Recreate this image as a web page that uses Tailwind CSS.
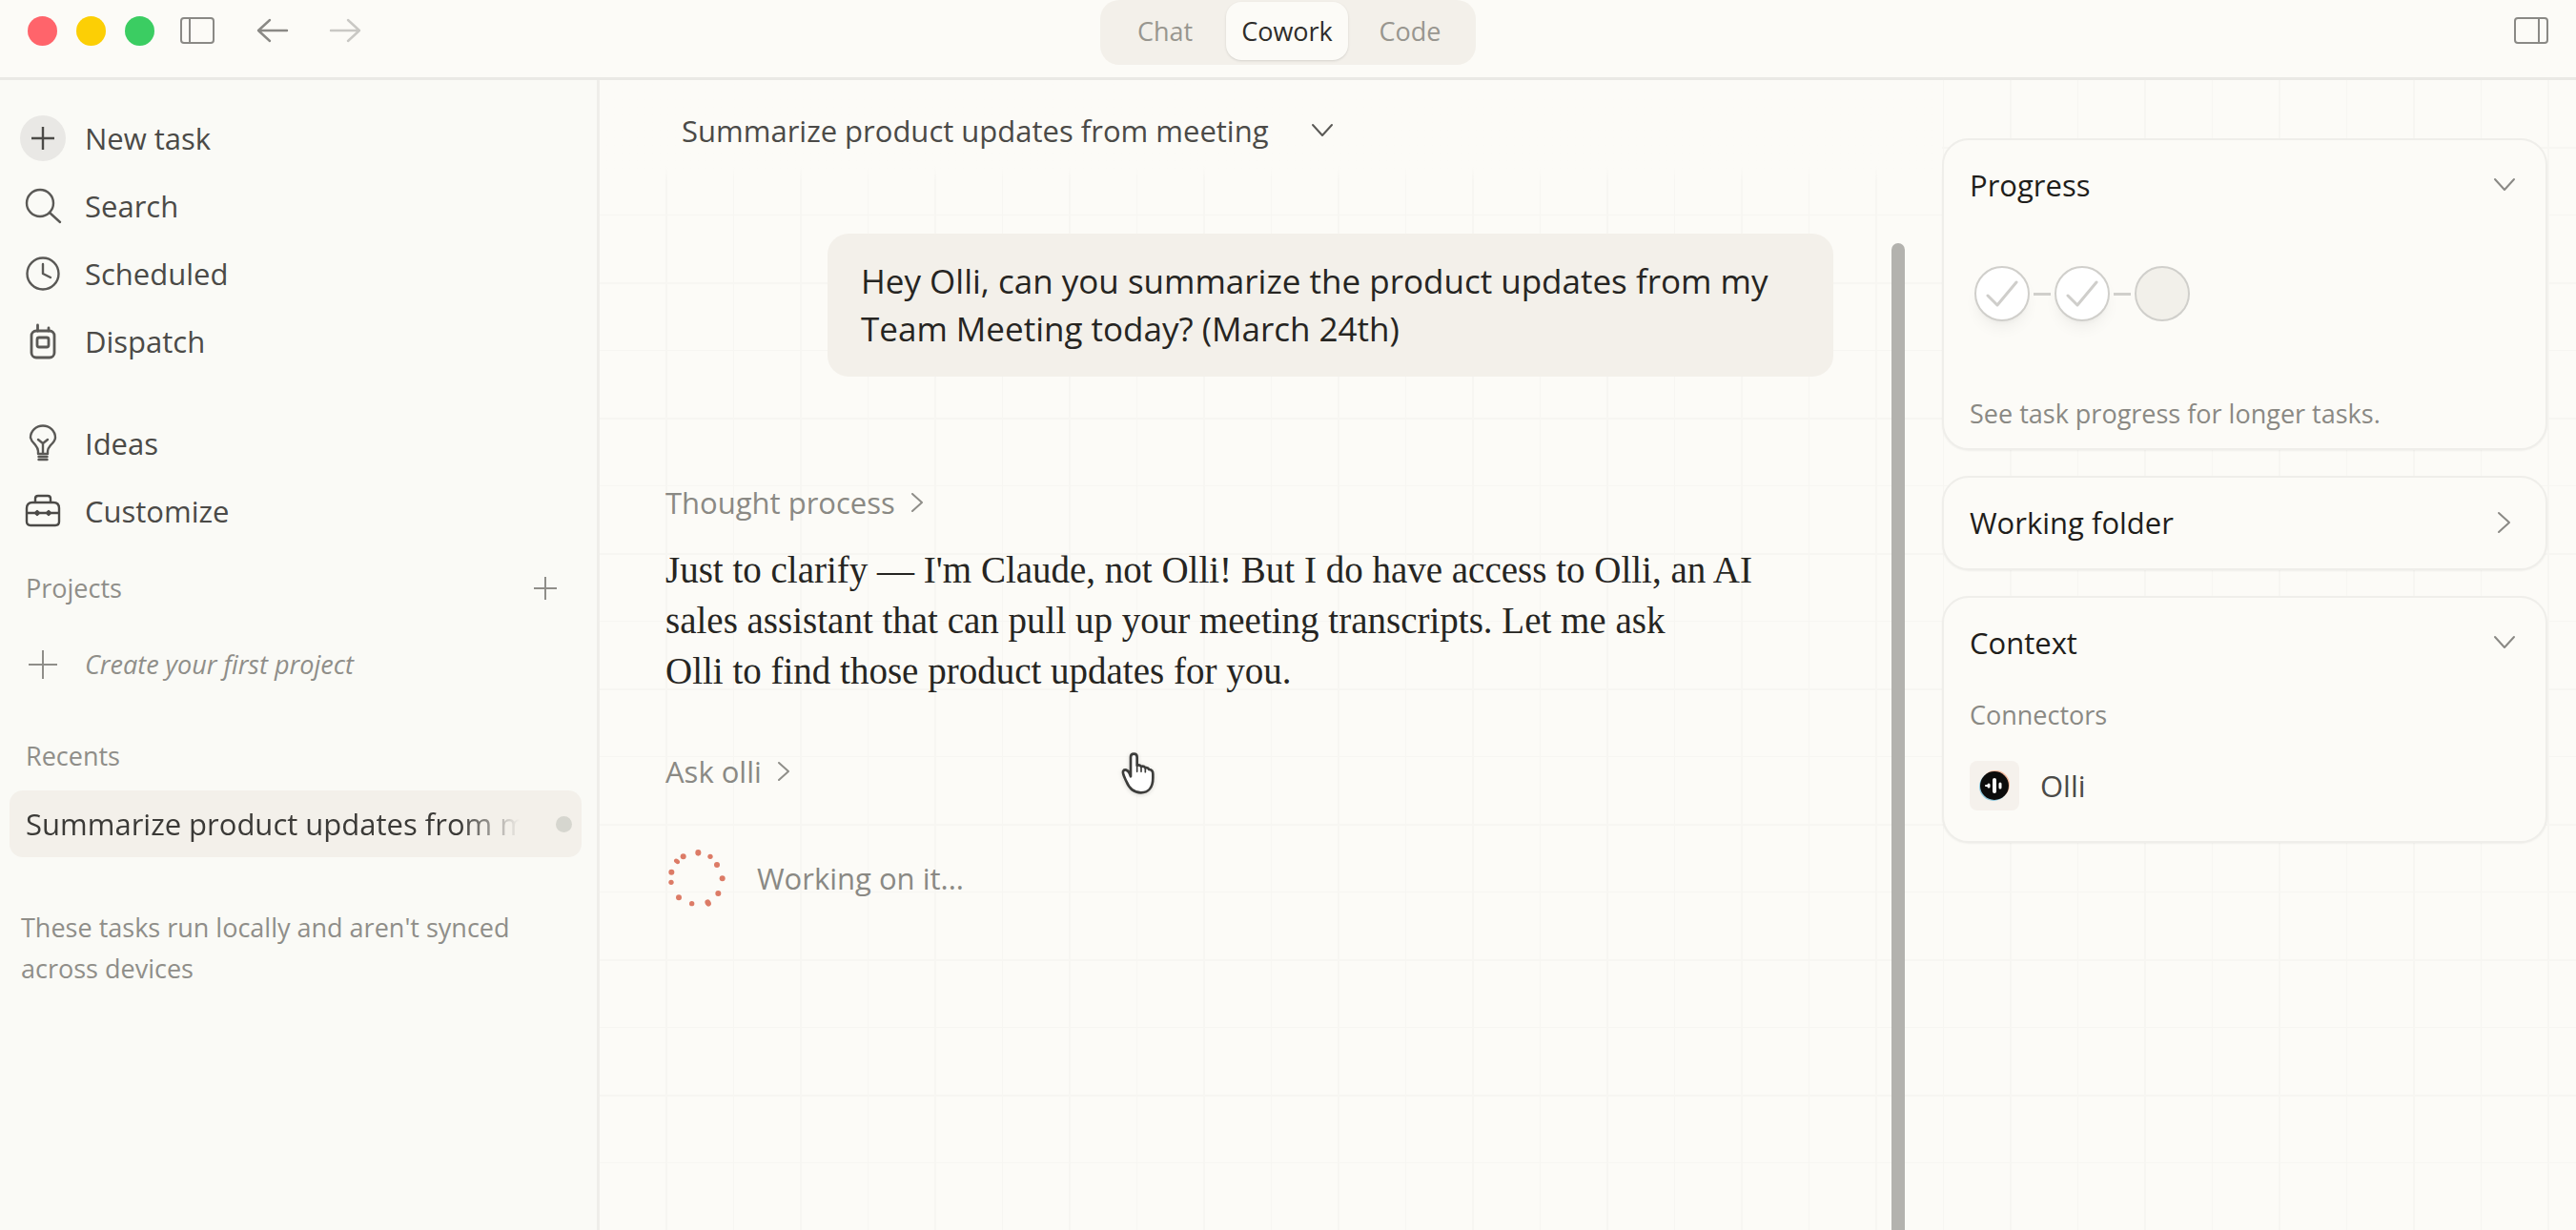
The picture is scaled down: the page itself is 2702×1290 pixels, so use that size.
<!DOCTYPE html>
<html lang="en">
<head>
  <meta charset="UTF-8" />
  <meta name="viewport" content="width=device-width, initial-scale=1.0"/>
  <title>Cowork | Summarize product updates from meeting</title>
  <script src="https://cdn.jsdelivr.net/npm/@tailwindcss/browser@4"></script>
</head>
<body class="bg-[#fcfbf7] text-[#4b4a47] font-['Open_Sans',sans-serif] text-[31px] leading-10">

  <div class="h-screen flex flex-col overflow-hidden">

    <!-- Title bar -->
    <header class="h-[84px] shrink-0 grid grid-cols-[1fr_auto_1fr] items-start border-b-3 border-[#eae9e5]">
      <div class="h-16 pl-[29px] flex items-center">
        <div class="flex gap-5">
          <button aria-label="Close" class="size-[31px] rounded-full bg-[#ff646b]"></button>
          <button aria-label="Minimize" class="size-[31px] rounded-full bg-[#fccf05]"></button>
          <button aria-label="Zoom" class="size-[31px] rounded-full bg-[#3bcd62]"></button>
        </div>
        <button aria-label="Toggle sidebar" class="ml-[26px]">
          <svg class="w-[38px] h-[30px]" viewBox="0 0 38 30" fill="none" stroke="#8a8985" stroke-width="2">
            <rect x="2" y="2" width="34" height="26" rx="3"/>
            <path d="M11 2v26"/>
          </svg>
        </button>
        <button aria-label="Back" class="ml-[43px]">
          <svg class="w-[34px] h-[30px]" viewBox="0 0 34 30" fill="none" stroke="#8a8985" stroke-width="2.400" stroke-linecap="round" stroke-linejoin="round">
            <path d="M32 15H2M14 4L2 15l12 11"/>
          </svg>
        </button>
        <button aria-label="Forward" class="ml-[42px]">
          <svg class="w-[34px] h-[30px]" viewBox="0 0 34 30" fill="none" stroke="#c9c8c4" stroke-width="2.400" stroke-linecap="round" stroke-linejoin="round">
            <path d="M2 15h30M20 4l12 11-12 11"/>
          </svg>
        </button>
      </div>

      <nav class="h-[68px] px-1 pt-[2px] pb-[5px] flex bg-[#f3f0ea] rounded-[20px] text-[27px] text-[#98968f]">
        <button class="w-32">Chat</button>
        <button class="w-32 rounded-2xl bg-[#fcfbf7] font-medium text-[#2e2d2a] shadow-sm">Cowork</button>
        <button class="w-[130px]">Code</button>
      </nav>

      <div class="h-16 pr-7 flex items-center justify-end">
        <button aria-label="Toggle panel">
          <svg class="w-[38px] h-[30px]" viewBox="0 0 38 30" fill="none" stroke="#8a8985" stroke-width="2">
            <rect x="2" y="2" width="34" height="26" rx="3"/>
            <path d="M27 2v26"/>
          </svg>
        </button>
      </div>
    </header>

    <div class="flex-1 flex min-h-0">

      <!-- Sidebar -->
      <aside class="w-[629px] shrink-0 pt-[25px] border-r-3 border-[#efeeea] bg-[#fafaf6]">
        <nav class="pl-[21px]">
          <a href="#" class="h-[71px] flex items-center gap-5">
            <span class="size-12 rounded-full bg-[#e9e8e5] flex items-center justify-center">
              <svg class="size-10" viewBox="0 0 40 40" fill="none" stroke="#4b4a47" stroke-width="2.400">
                <path d="M20 8v24M8 20h24"/>
              </svg>
            </span>
            New task
          </a>
          <a href="#" class="h-[71px] flex items-center gap-5">
            <span class="size-12 flex items-center justify-center">
              <svg class="size-10" viewBox="0 0 40 40" fill="none" stroke="#5a5956" stroke-width="2.400" stroke-linecap="round">
                <circle cx="17" cy="17" r="14"/>
                <path d="M27 27l11 10"/>
              </svg>
            </span>
            Search
          </a>
          <a href="#" class="h-[71px] flex items-center gap-5">
            <span class="size-12 flex items-center justify-center">
              <svg class="size-10" viewBox="0 0 40 40" fill="none" stroke="#5a5956" stroke-width="2.400" stroke-linecap="round" stroke-linejoin="round">
                <circle cx="20" cy="20" r="16.5"/>
                <path d="M20 10v10l8 4"/>
              </svg>
            </span>
            Scheduled
          </a>
          <a href="#" class="h-[71px] flex items-center gap-5">
            <span class="size-12 flex items-center justify-center">
              <svg class="size-10" viewBox="0 0 40 40" fill="none" stroke="#5a5956" stroke-width="2.800" stroke-linecap="round">
                <rect x="8" y="9" width="24" height="28" rx="5"/>
                <rect x="14" y="16" width="12" height="10" rx="2"/>
                <path d="M14.500 9V3M26 9V6"/>
              </svg>
            </span>
            Dispatch
          </a>
          <a href="#" class="h-[71px] mt-9 flex items-center gap-5">
            <span class="size-12 flex items-center justify-center">
              <svg class="size-10" viewBox="0 0 40 40" fill="none" stroke="#5a5956" stroke-width="2.400" stroke-linecap="round" stroke-linejoin="round">
                <path d="M15 31v-3c0-3-1.500-4.500-3.500-7A13 13 0 0 1 7 14a13 12.500 0 0 1 26 0c0 3-2 5-4.500 7.500-2 2.500-3.500 4-3.500 6.500v3z"/>
                <path d="M15 16l5 4 5-4M20 20v10M15.500 34h9M15.500 37h9"/>
              </svg>
            </span>
            Ideas
          </a>
          <a href="#" class="h-[71px] flex items-center gap-5">
            <span class="size-12 flex items-center justify-center">
              <svg class="size-10" viewBox="0 0 40 40" fill="none" stroke="#4b4a47" stroke-width="2.400" stroke-linejoin="round">
                <path d="M12 11V7q0-3 3-3h10q3 0 3 3v4"/>
                <path d="M3 31V17q0-6 6-6h22q6 0 6 6v14q0 4-4 4H7q-4 0-4-4z"/>
                <path d="M3 22h34"/>
                <path d="M14 20l2 2-2 2-2-2zM26 20l2 2-2 2-2-2z" fill="#4b4a47"/>
              </svg>
            </span>
            Customize
          </a>
        </nav>

        <div class="h-[72px] mt-[10px] pl-[27px] pr-[34px] flex items-center justify-between text-[27px] text-[#8f8e89]">
          <h2>Projects</h2>
          <button aria-label="Add project">
            <svg class="size-10" viewBox="0 0 40 40" fill="none" stroke="#8f8e89" stroke-width="2">
              <path d="M20 8v24M8 20h24"/>
            </svg>
          </button>
        </div>
        <a href="#" class="h-[72px] mt-2 pl-[21px] flex items-center gap-5 text-[27px] italic text-[#8f8e89]">
          <span class="size-12 flex items-center justify-center">
            <svg class="size-10" viewBox="0 0 40 40" fill="none" stroke="#8f8e89" stroke-width="2">
              <path d="M20 5v30M5 20h30"/>
            </svg>
          </span>
          Create your first project
        </a>

        <h2 class="h-[72px] mt-6 pl-[27px] flex items-center text-[27px] text-[#8f8e89]">Recents</h2>
        <a href="#" class="h-[70px] ml-[10px] mr-4 pl-[17px] pr-[10px] rounded-[14px] bg-[#f3f0ea] flex items-center justify-between text-[#3b3a37]">
          <span class="w-[518px] overflow-hidden whitespace-nowrap [mask-image:linear-gradient(to_right,#000_88%,transparent)]">Summarize product updates from meeting</span>
          <span class="size-[17px] rounded-full bg-[#d6d6cf]"></span>
        </a>

        <p class="mt-[52px] px-[22px] max-w-[580px] text-[27px] leading-[43px] text-[#8f8e89]">These tasks run locally and aren't synced across devices</p>
      </aside>

      <!-- Faint grid sits behind the conversation and the right panel -->
      <div class="flex-1 flex min-w-0 bg-[repeating-linear-gradient(to_right,transparent_0_69px,#f7f6f2_69px_71px,transparent_71px_140px,#f7f6f2_140px_141px),repeating-linear-gradient(to_bottom,transparent_0_70px,#f7f6f2_70px_72px,transparent_72px_141px,#f7f6f2_141px_142px)]">

        <main class="relative flex-1 flex flex-col min-w-0">
          <div class="h-[106px] shrink-0 pl-[86px] flex items-center bg-linear-to-b from-[#fcfbf7] from-85% to-transparent">
            <button class="flex items-center gap-11">
              Summarize product updates from meeting
              <svg class="w-6 h-4" viewBox="0 0 24 16" fill="none" stroke="#5a5956" stroke-width="2" stroke-linecap="round" stroke-linejoin="round">
                <path d="M2 2l10 11L22 2"/>
              </svg>
            </button>
          </div>

          <div class="flex-1 flex min-h-0 pt-[55px]">
            <div class="flex-1 pl-[69px] pr-[61px] flex flex-col items-start">
              <div class="self-end max-w-[1055px] px-[35px] py-[25px] rounded-[22px] bg-[#f3f0ea] text-[35px] leading-[50px] text-[#262522]">
                Hey Olli, can you summarize the product updates from my Team Meeting today? (March 24th)
              </div>

              <button class="mt-28 flex items-center gap-4 text-[#8a8984]">
                Thought process
                <svg class="w-[14px] h-5" viewBox="0 0 14 20" fill="none" stroke="#8f8e89" stroke-width="2" stroke-linecap="round" stroke-linejoin="round">
                  <path d="M2 1l10 9-10 9"/>
                </svg>
              </button>
              <p class="mt-6 font-['Liberation_Serif',serif] text-[39px] leading-[53px] text-[#262522]">
                Just to clarify — I'm Claude, not Olli! But I do have access to Olli, an AI<br>
                sales assistant that can pull up your meeting transcripts. Let me ask<br>
                Olli to find those product updates for you.
              </p>

              <button class="mt-[59px] flex items-center gap-4 text-[#8a8984]">
                Ask olli
                <svg class="w-[14px] h-5" viewBox="0 0 14 20" fill="none" stroke="#8f8e89" stroke-width="2" stroke-linecap="round" stroke-linejoin="round">
                  <path d="M2 1l10 9-10 9"/>
                </svg>
              </button>

              <div class="mt-[60px] flex items-center gap-8 text-[#8a8984]">
                <svg class="size-16" viewBox="55 59 192 192" fill="#dc7b66">
                  <ellipse cx="158" cy="75" rx="9" ry="10"/>
                  <circle cx="196" cy="87" r="8"/>
                  <circle cx="217" cy="113" r="9"/>
                  <circle cx="234" cy="156" r="9"/>
                  <circle cx="221" cy="203" r="9"/>
                  <ellipse cx="189" cy="233" rx="9" ry="11" transform="rotate(-30 189 233)"/>
                  <circle cx="138" cy="235" r="8"/>
                  <circle cx="97" cy="216" r="9"/>
                  <circle cx="73" cy="168" r="8"/>
                  <circle cx="74" cy="136" r="9"/>
                  <ellipse cx="91" cy="102" rx="10" ry="7" transform="rotate(40 91 102)"/>
                  <circle cx="111" cy="87" r="9"/>
                </svg>
                Working on it...
              </div>
            </div>

            <!-- Scroll thumb -->
            <div class="w-[14px] mt-[10px] mr-[39px] rounded-t-full bg-[#b3b2ae]"></div>
          </div>

          <!-- Hand pointer -->
          <svg class="absolute left-[547px] top-[704px] w-9 h-[46px] drop-shadow-sm" viewBox="48 53 108 138" fill="#fff" stroke="#3d3d3b" stroke-width="8" stroke-linejoin="round" stroke-linecap="round">
            <path d="M78 132V71q0-10 10-10t10 10v26q8-3 13 4 8-3 13 4 8-2 12 5 12 1 12 14v12c0 30-14 47-38 47s-38-16-46-36c-5-12-12-23-10-31 4-9 16-4 20 6z"/>
            <path d="M98 97v20M111 101v16M124 105v13" fill="none" stroke-width="5"/>
          </svg>
        </main>

        <!-- Right panel -->
        <aside class="w-[665px] shrink-0 pt-[61px] pr-[30px] flex flex-col gap-[27px]">
          <section class="border-2 border-[#efeeea] rounded-[28px] bg-[#fcfbf7] px-[27px] pt-[27px] pb-4 shadow-xs">
            <button class="w-full flex items-center justify-between pr-1 font-medium text-[#1f1e1b]">
              Progress
              <svg class="w-6 h-4" viewBox="0 0 24 16" fill="none" stroke="#8a8985" stroke-width="2" stroke-linecap="round" stroke-linejoin="round">
                <path d="M2 2l10 11L22 2"/>
              </svg>
            </button>
            <div class="mt-[65px] ml-[5px] flex items-center gap-1">
              <span class="size-[58px] rounded-full border-2 border-[#d0cfcb] bg-white shadow-lg shadow-black/5 flex items-center justify-center">
                <svg class="w-9 h-7" viewBox="0 0 36 28" fill="none" stroke="#cfcecb" stroke-width="3" stroke-linecap="round" stroke-linejoin="round">
                  <path d="M3 16l10 10L33 2"/>
                </svg>
              </span>
              <span class="w-[18px] h-[3px] bg-[#d0cfcb]"></span>
              <span class="size-[58px] rounded-full border-2 border-[#d0cfcb] bg-white shadow-lg shadow-black/5 flex items-center justify-center">
                <svg class="w-9 h-7" viewBox="0 0 36 28" fill="none" stroke="#cfcecb" stroke-width="3" stroke-linecap="round" stroke-linejoin="round">
                  <path d="M3 16l10 10L33 2"/>
                </svg>
              </span>
              <span class="w-[18px] h-[3px] bg-[#d0cfcb]"></span>
              <span class="size-[58px] rounded-full border-2 border-[#d0cfcb] bg-[#f2f0ea]"></span>
            </div>
            <p class="mt-[77px] text-[27px] text-[#8a8984]">See task progress for longer tasks.</p>
          </section>

          <section class="border-2 border-[#efeeea] rounded-[28px] bg-[#fcfbf7] px-[27px] pt-[27px] pb-7 shadow-xs">
            <button class="w-full flex items-center justify-between pr-2 font-medium text-[#1f1e1b]">
              Working folder
              <svg class="w-4 h-6" viewBox="0 0 16 24" fill="none" stroke="#8a8985" stroke-width="2" stroke-linecap="round" stroke-linejoin="round">
                <path d="M2 2l11 10L2 22"/>
              </svg>
            </button>
          </section>

          <section class="border-2 border-[#efeeea] rounded-[28px] bg-[#fcfbf7] px-[27px] pt-[27px] pb-8 shadow-xs">
            <button class="w-full flex items-center justify-between pr-1 font-medium text-[#1f1e1b]">
              Context
              <svg class="w-6 h-4" viewBox="0 0 24 16" fill="none" stroke="#8a8985" stroke-width="2" stroke-linecap="round" stroke-linejoin="round">
                <path d="M2 2l10 11L22 2"/>
              </svg>
            </button>
            <h3 class="mt-9 text-[27px] text-[#8a8984]">Connectors</h3>
            <div class="mt-7 flex items-center gap-[22px]">
              <span class="size-[52px] rounded-lg bg-[#f5f1ec] flex items-center justify-center">
                <svg class="size-8" viewBox="0 0 32 32">
                  <circle cx="17" cy="15" r="15" fill="#f0b79b"/>
                  <circle cx="15" cy="17" r="15" fill="#8fc8dc"/>
                  <circle cx="16" cy="16" r="15" fill="#0c0c0c"/>
                  <path d="M16 10v12" stroke="#fff" stroke-width="4" stroke-linecap="round"/>
                  <path d="M22 14v4M10 15v2" stroke="#fff" stroke-width="3" stroke-linecap="round"/>
                  <path d="M7 16h3" stroke="#fff" stroke-width="2" stroke-linecap="round"/>
                </svg>
              </span>
              Olli
            </div>
          </section>
        </aside>
      </div>
    </div>
  </div>
</body>
</html>
